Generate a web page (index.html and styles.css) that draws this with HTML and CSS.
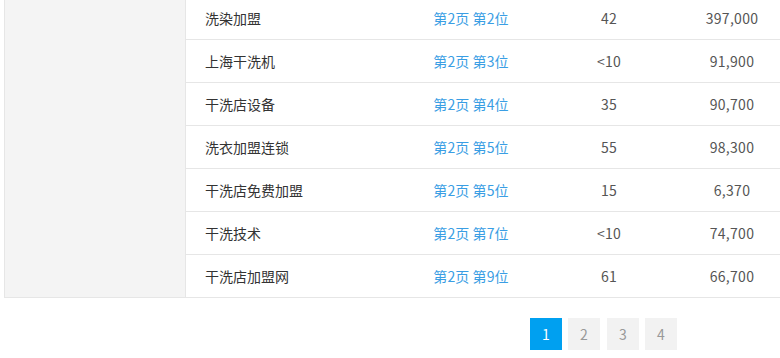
FILE: index.html
```html
<!DOCTYPE html>
<html lang="zh-CN">
<head>
<meta charset="utf-8">
<title>关键词排名</title>
<link rel="stylesheet" href="styles.css">
</head>
<body>
<div class="board">
  <div class="side"></div>
  <div class="table">
    <div class="row"><span class="name">洗染加盟</span><a class="rank">第2页 第2位</a><span class="num">42</span><span class="vol">397,000</span></div>
    <div class="row"><span class="name">上海干洗机</span><a class="rank">第2页 第3位</a><span class="num">&lt;10</span><span class="vol">91,900</span></div>
    <div class="row"><span class="name">干洗店设备</span><a class="rank">第2页 第4位</a><span class="num">35</span><span class="vol">90,700</span></div>
    <div class="row"><span class="name">洗衣加盟连锁</span><a class="rank">第2页 第5位</a><span class="num">55</span><span class="vol">98,300</span></div>
    <div class="row"><span class="name">干洗店免费加盟</span><a class="rank">第2页 第5位</a><span class="num">15</span><span class="vol">6,370</span></div>
    <div class="row"><span class="name">干洗技术</span><a class="rank">第2页 第7位</a><span class="num">&lt;10</span><span class="vol">74,700</span></div>
    <div class="row"><span class="name">干洗店加盟网</span><a class="rank">第2页 第9位</a><span class="num">61</span><span class="vol">66,700</span></div>
  </div>
</div>
<div class="pager">
  <span class="page active">1</span>
  <span class="page">2</span>
  <span class="page">3</span>
  <span class="page">4</span>
</div>
</body>
</html>
```

FILE: styles.css
```css
html, body {
  margin: 0;
  padding: 0;
  background: #fff;
  overflow: hidden;
  font-family: "Microsoft YaHei", "Noto Sans CJK SC", sans-serif;
  font-size: 14px;
}
.board {
  display: flex;
  margin: -3px 0 0 4px;
  border-left: 1px solid #e6e6e6;
  border-bottom: 1px solid #e6e6e6;
}
.side {
  width: 180px;
  flex: none;
  background: #f4f4f4;
  border-right: 1px solid #e6e6e6;
}
.table {
  flex: 1;
  min-width: 0;
}
.row {
  display: grid;
  grid-template-columns: 224px 122px 154px 92px 1fr;
  height: 42px;
  line-height: 42px;
  border-bottom: 1px solid #e6e6e6;
}
.row:last-child {
  border-bottom: none;
}
.name {
  padding-left: 19px;
  color: #333;
}
.rank {
  text-align: center;
  color: #3a9ee4;
  letter-spacing: 0.1px;
  cursor: pointer;
}
.num, .vol {
  text-align: center;
  color: #555;
  letter-spacing: 0.3px;
}
.pager {
  display: flex;
  padding: 20px 0 0 530px;
}
.page {
  width: 32px;
  height: 32px;
  margin-right: 6px;
  line-height: 32px;
  text-align: center;
  background: #f2f2f2;
  color: #999;
  font-size: 14px;
}
.page:nth-child(3) {
  margin-left: 1px;
}
.page.active {
  background: #00a0f0;
  color: #fff;
}
```
